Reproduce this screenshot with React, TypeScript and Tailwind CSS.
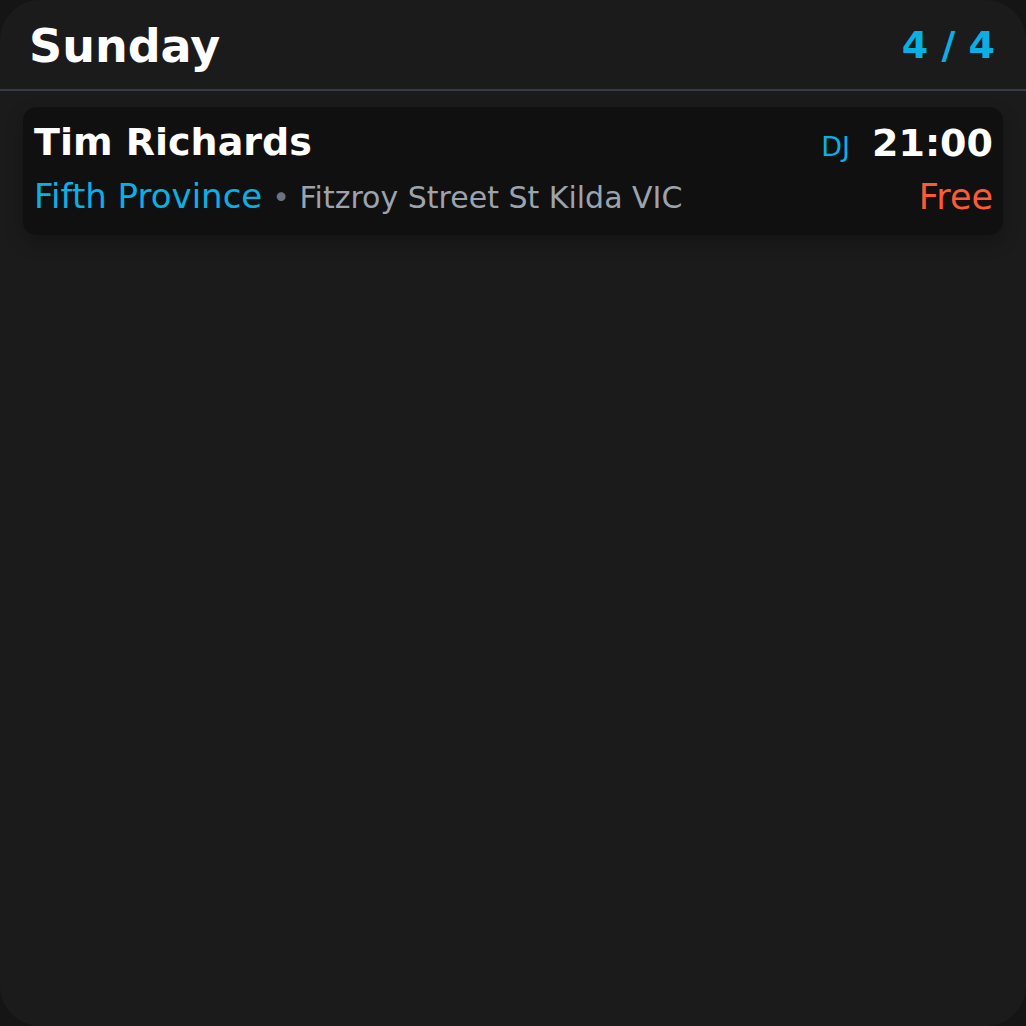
import React from "react";

export default function App() {
  return (
    <div
      className="h-[1026px] w-full bg-[#151515]"
      style={{ fontFamily: '"DejaVu Sans", "Liberation Sans", sans-serif' }}
    >
      <div className="flex h-full flex-col overflow-hidden rounded-[40px] bg-[#1b1b1b]">
        <header className="flex h-[91px] shrink-0 items-start justify-between border-b-2 border-[#363b45] pl-[29px] pr-[31px] pt-[23px]">
          <h1 className="text-[46px] font-bold leading-none text-white">Sunday</h1>
          <span className="mt-[3px] text-[38px] font-bold leading-none text-[#0ab0e3]">4 / 4</span>
        </header>
        <div className="px-[23px] pt-[16px]">
          <div className="flex justify-between rounded-[14px] bg-[#101010] pb-[20px] pl-[11px] pr-[10px] pt-[16px] shadow-[0_8px_18px_rgba(0,0,0,0.25)]">
            <div className="flex flex-col">
              <div className="text-[38px] font-bold leading-none text-white">Tim Richards</div>
              <div className="mt-[18px] flex items-baseline gap-[10px] leading-none">
                <span className="text-[34px] leading-none text-[#0ab0e3]">Fifth Province</span>
                <span className="text-[30px] leading-none text-[#9ca3af]">
                  <span className="text-[#6b7280]">•</span> Fitzroy Street St Kilda VIC
                </span>
              </div>
            </div>
            <div className="mt-[1px] flex flex-col items-end">
              <div className="flex items-baseline gap-[22px] leading-none">
                <span className="text-[27px] leading-none text-[#0ab0e3]">DJ</span>
                <span className="text-[38px] font-bold leading-none text-white">21:00</span>
              </div>
              <div className="mt-[18px] text-[35px] leading-none text-[#ff5a36]">Free</div>
            </div>
          </div>
        </div>
      </div>
    </div>
  );
}
